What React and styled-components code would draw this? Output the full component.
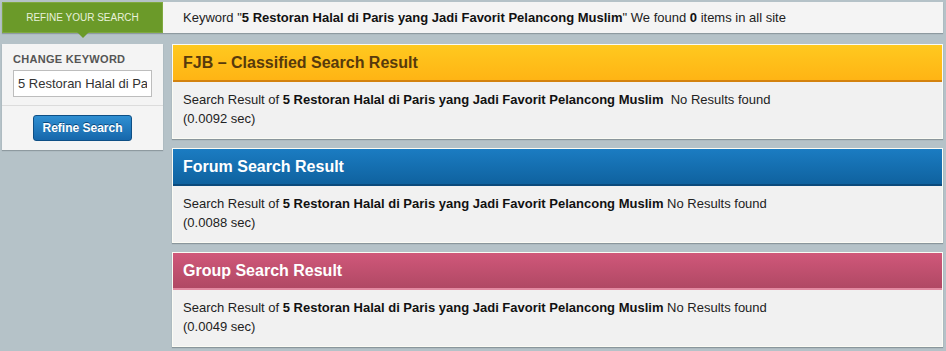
import React from 'react';
import styled, { createGlobalStyle } from 'styled-components';

const GlobalStyle = createGlobalStyle`
  html, body {
    margin: 0;
    padding: 0;
    background: #b5c2c8;
    font-family: Arial, "Liberation Sans", Helvetica, sans-serif;
    font-size: 13px;
    color: #222;
  }
`;

const Page = styled.div`
  width: 946px;
  height: 351px;
  padding: 2px 3px 0 2px;
  box-sizing: border-box;
  display: flex;
  flex-direction: column;
  gap: 11px;
  overflow: hidden;
`;

const TopBar = styled.div`
  height: 31px;
  display: flex;
  align-items: stretch;
  background: #f4f4f4;
  box-shadow: 0 1px 1px #8e9aa0;
`;

const Tab = styled.div`
  position: relative;
  width: 161px;
  flex-shrink: 0;
  background: #6b9a29;
  border: 1px solid #7fa93f;
  box-sizing: border-box;
  color: #e9f1dc;
  font-size: 10px;
  text-transform: uppercase;
  display: flex;
  align-items: center;
  justify-content: center;

  &::after {
    content: '';
    position: absolute;
    left: 50%;
    bottom: -6px;
    margin-left: -6px;
    border-left: 6px solid transparent;
    border-right: 6px solid transparent;
    border-top: 6px solid #6b9a29;
  }
`;

const Summary = styled.div`
  display: flex;
  align-items: center;
  padding-left: 20px;
  white-space: pre;
  color: #222;

  b { color: #111; }
`;

const Content = styled.div`
  display: flex;
  gap: 9px;
  align-items: flex-start;
`;

const Sidebar = styled.div`
  width: 161px;
  flex-shrink: 0;
  background: #f4f4f4;
  box-shadow: 0 1px 1px #8e9aa0;
  display: flex;
  flex-direction: column;
`;

const SideTop = styled.div`
  padding: 9px 10px 8px 11px;
  border-bottom: 1px solid #dcdcdc;
  display: flex;
  flex-direction: column;
  gap: 5px;
`;

const Label = styled.div`
  font-size: 11px;
  font-weight: bold;
  letter-spacing: 0.3px;
  color: #555;
`;

const Input = styled.input`
  width: 139px;
  height: 27px;
  box-sizing: border-box;
  border: 1px solid #bdbdbd;
  background: #fff;
  font-family: Arial, "Liberation Sans", sans-serif;
  font-size: 13px;
  color: #333;
  padding: 0 4px;
  outline: none;
`;

const SideBottom = styled.div`
  padding: 9px 0 9px;
  display: flex;
  justify-content: center;
`;

const Button = styled.button`
  width: 99px;
  height: 26px;
  border: 1px solid #0e4f85;
  border-radius: 3px;
  background: linear-gradient(#2f8fd2, #1667ab);
  color: #fff;
  font-family: Arial, "Liberation Sans", sans-serif;
  font-size: 12px;
  font-weight: bold;
  text-shadow: 0 -1px 0 #0c4a7e;
  cursor: pointer;
`;

const Results = styled.div`
  flex: 1;
  display: flex;
  flex-direction: column;
  gap: 9px;
`;

const Panel = styled.div`
  border: 1px solid #fbfbf4;
  background: #f1f1f1;
  box-shadow: 0 1px 1px #8a969c;
`;

const themes = {
  fjb: { top: '#ffc91f', bottom: '#ffb414', line: '#d3820e', color: '#573a0c' },
  forum: { top: '#1b7cc2', bottom: '#0f629f', line: '#0b4a7c', color: '#fff' },
  group: { top: '#d0587a', bottom: '#b04864', line: '#e38aa2', color: '#fff' },
};

const Header = styled.div`
  height: 35px;
  background: linear-gradient(${p => themes[p.$kind].top}, ${p => themes[p.$kind].bottom});
  border-bottom: 2px solid ${p => themes[p.$kind].line};
  color: ${p => themes[p.$kind].color};
  font-size: 16px;
  font-weight: bold;
  display: flex;
  align-items: center;
  padding-left: 10px;
`;

const Body = styled.div`
  height: 56px;
  padding: 8px 10px 0;
  box-sizing: border-box;
  line-height: 19px;
  color: #222;

  b { color: #111; }
`;

const keyword = '5 Restoran Halal di Paris yang Jadi Favorit Pelancong Muslim';

const results = [
  { kind: 'fjb', title: 'FJB – Classified Search Result', time: '0.0092', gap: '  ' },
  { kind: 'forum', title: 'Forum Search Result', time: '0.0088', gap: ' ' },
  { kind: 'group', title: 'Group Search Result', time: '0.0049', gap: ' ' },
];

export default function App() {
  return (
    <>
      <GlobalStyle />
      <Page>
        <TopBar>
          <Tab>Refine your search</Tab>
          <Summary>
            Keyword "<b>{keyword}</b>" We found <b>0</b> items in all site
          </Summary>
        </TopBar>
        <Content>
          <Sidebar>
            <SideTop>
              <Label>CHANGE KEYWORD</Label>
              <Input defaultValue={keyword} />
            </SideTop>
            <SideBottom>
              <Button>Refine Search</Button>
            </SideBottom>
          </Sidebar>
          <Results>
            {results.map(r => (
              <Panel key={r.kind}>
                <Header $kind={r.kind}>{r.title}</Header>
                <Body>
                  <span style={{ whiteSpace: 'pre' }}>
                    Search Result of <b>{keyword}</b>{r.gap}No Results found
                  </span>
                  <br />({r.time} sec)
                </Body>
              </Panel>
            ))}
          </Results>
        </Content>
      </Page>
    </>
  );
}
